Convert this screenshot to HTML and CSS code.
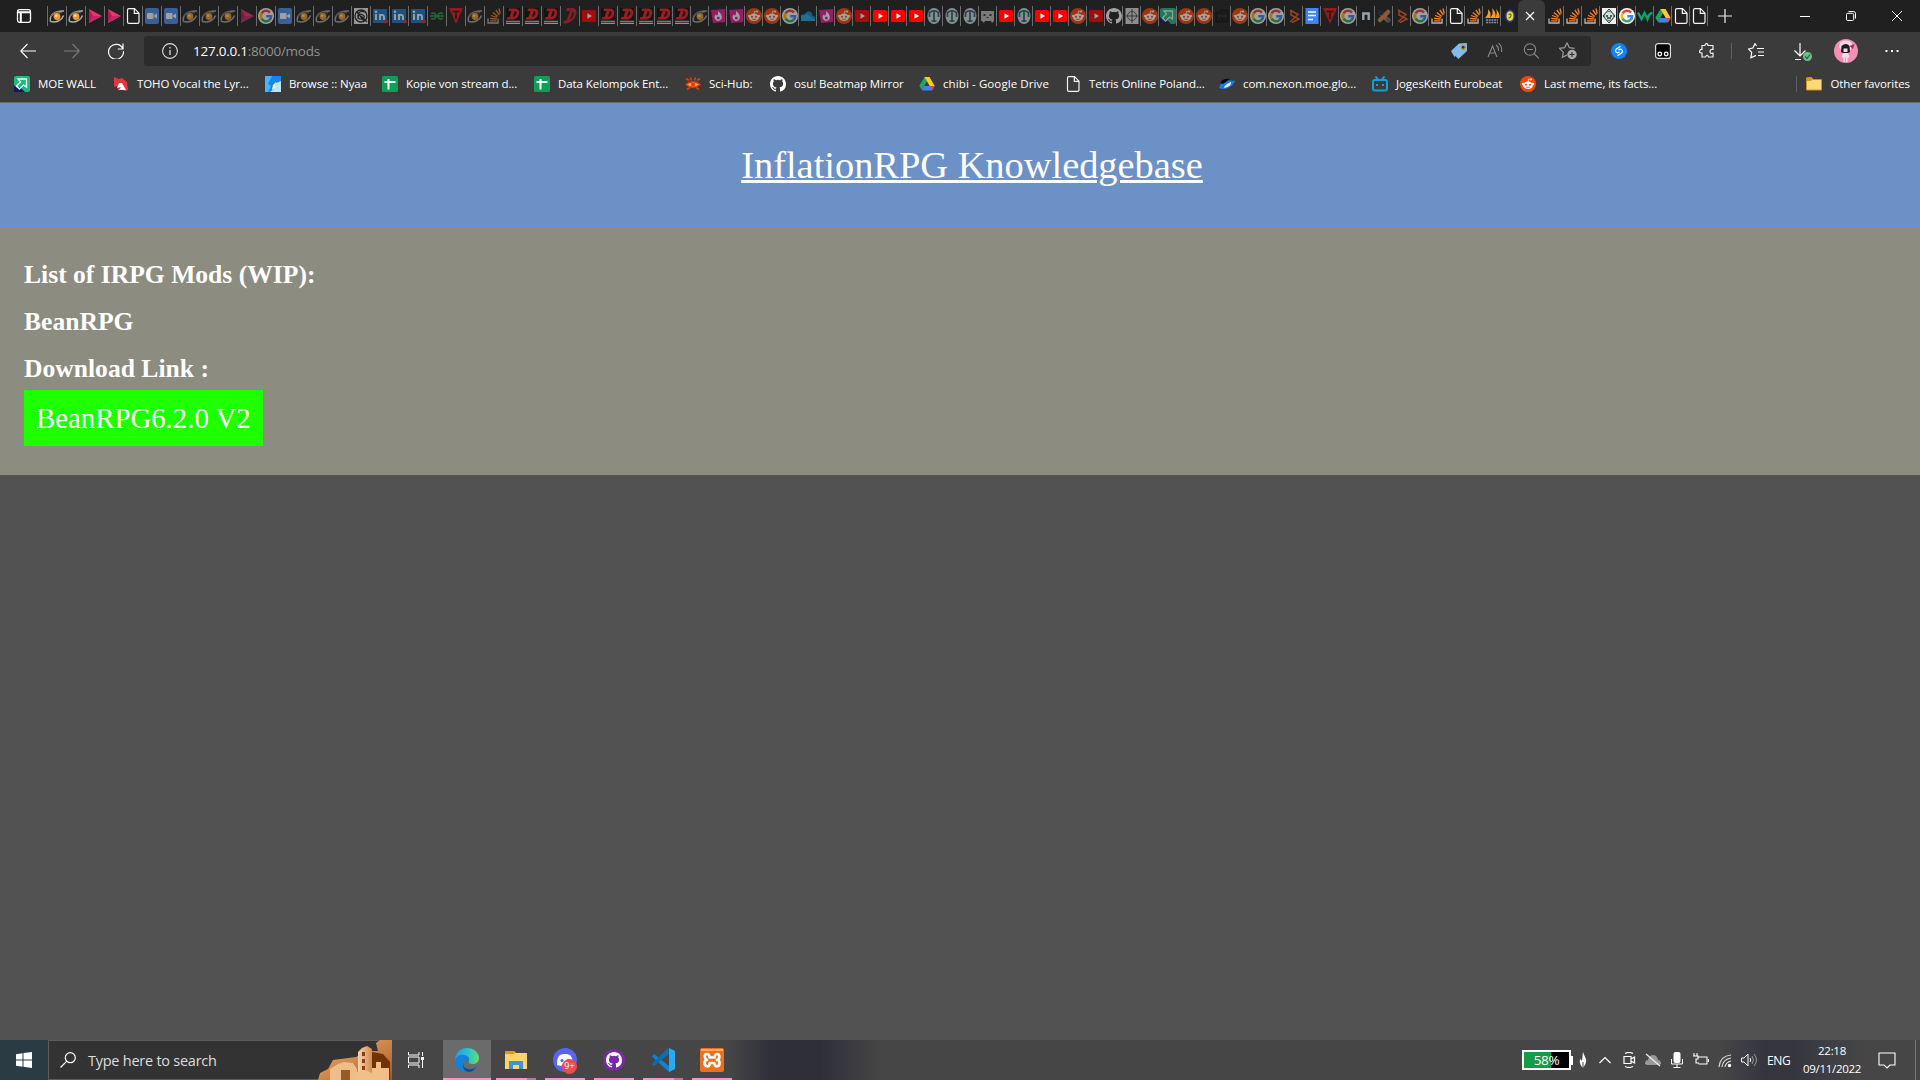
FILE: index.html
```html
<!DOCTYPE html>
<html lang="en">
<head>
<meta charset="utf-8">
<title>InflationRPG Knowledgebase</title>
<link rel="stylesheet" href="styles.css">
</head>
<body>
<svg class="sprite" aria-hidden="true">
  <symbol id="eye" viewBox="0 0 16 16"><path d="M1.500 13.500C0 7 6 2.500 15 3M1.500 13.500C8 15 13 12 14.500 7.500" fill="none" stroke="#a9a9a9" stroke-width="1.500"/><path d="M2 8.500C4 4 9 3.500 13 5" fill="none" stroke="#666" stroke-width="1.200"/><circle cx="8" cy="8.500" r="3.400" fill="#f39a26"/><circle cx="7.300" cy="7.800" r="1.300" fill="#ffe0a0"/></symbol>
  <symbol id="pink" viewBox="0 0 16 16"><path d="M2 1l13 7-13 7z" fill="#e8356f"/><path d="M2 1l4 7-4 7z" fill="#b01d58"/><path d="M2 15l4-7 9 0z" fill="#c92562"/></symbol>
  <symbol id="doc" viewBox="0 0 16 16"><path d="M2.500 2Q2.500.7 4 .7H9.500L14 5.200V14Q14 15.300 12.500 15.300H4Q2.500 15.300 2.500 14ZM9.300.7V5.400H14" fill="none" stroke="#f4f4f4" stroke-width="1.200"/></symbol>
  <symbol id="zoom" viewBox="0 0 16 16"><rect x="1" width="14" height="16" rx="2" fill="#4a8df0"/><rect x="3" y="5" width="6.500" height="6" rx="1" fill="#fff"/><path d="M10 7.500l3-2v5l-3-2z" fill="#fff"/></symbol>
  <symbol id="goog" viewBox="0 0 16 16"><circle cx="8" cy="8" r="8" fill="#fff"/><g fill="none" stroke-width="2.600"><path d="M12 4.600A5.100 5.100 0 0 0 3.600 5.400" stroke="#ea4335"/><path d="M3.600 5.400A5.100 5.100 0 0 0 3.600 10.600" stroke="#fbbc05"/><path d="M3.600 10.600A5.100 5.100 0 0 0 11.400 12" stroke="#34a853"/><path d="M11.400 12A5 5 0 0 0 13.100 8.200H8.200" stroke="#4285f4"/></g></symbol>
  <symbol id="knot" viewBox="0 0 16 16"><path d="M1 0h14v16H1z" fill="#eee"/><g fill="none" stroke="#222" stroke-width="1.300"><circle cx="8" cy="8" r="6"/><path d="M12 4Q6 2 5 7T10 11Q13 8 9 6.500T5 11M8 8l6 6M4 4l7 9"/></g></symbol>
  <symbol id="linked" viewBox="0 0 16 16"><path d="M1 1h14v14H1z" fill="#1679c8"/><path d="M4 6v6M8 12V6M8 9Q8 6.800 10 6.800T12 9V12" fill="none" stroke="#fff" stroke-width="1.800"/><circle cx="4" cy="3.800" r="1.200" fill="#fff"/><circle cx="14" cy="13.500" r="2" fill="#e3223a"/></symbol>
  <symbol id="gfg" viewBox="0 0 16 16"><path d="M2 5.500Q7 4 7 8T2 10.500M1 8h14M14 5.500Q9 4 9 8T14 10.500" fill="none" stroke="#2d9b4c" stroke-width="1.500"/></symbol>
  <symbol id="tri" viewBox="0 0 16 16"><path d="M1 0h14L8 16z" fill="#e3191d"/><path d="M4.500 3.500h7M8 3.500V11" stroke="#3b1012" stroke-width="1.700"/></symbol>
  <symbol id="stack" viewBox="0 0 16 16"><path d="M2 10.500V15H12V10.500" fill="none" stroke="#b8b8b8" stroke-width="1.300"/><path d="M4 12.800h6.500M4.100 10.300l6.500.7M5 7.500l6 2M6.800 4.500l5 4M9.800 2l3.600 5M13 .5l1.200 5" stroke="#f48024" stroke-width="1.300"/></symbol>
  <symbol id="dee" viewBox="0 0 16 16"><path d="M1 0h14v13H1z" fill="#0d0d0d"/><path d="M4 .5h6q5.500.5 4 6T6 11.500H1.500l1-2.500H4.500L6.500 3H3.500zM9.800 3L7.800 9q2.700-.3 3.500-3T9.800 3z" fill="#f01c24" fill-rule="evenodd"/><path d="M1 13.200h14M1 15.400h14" stroke="#e5e5e5" stroke-width="1.100"/></symbol>
  <symbol id="dee2" viewBox="0 0 16 16"><path d="M5 0H11Q16 1 14 7T5 15.500H1L2 12.500H4.500L8 3H4zM10.500 4L8 12Q10.500 10.500 11.500 7T10.500 4z" fill="#c91d2a" fill-rule="evenodd"/></symbol>
  <symbol id="yt" viewBox="0 0 16 16"><rect x="1" y="2" width="14" height="12" rx="1.500" fill="#f00"/><path d="M6.500 5.300L11 8l-4.500 2.700z" fill="#fff"/></symbol>
  <symbol id="fire" viewBox="0 0 16 16"><path d="M1 2L15 1V14L3 15Z" fill="#e81c9c"/><path d="M8 3Q13 7 11.500 11Q8 15 5 11Q3.800 8 6 6.500L7 8Q8.500 6 8 3" fill="#fff"/><circle cx="8.300" cy="10" r="1.500" fill="#e81c9c"/></symbol>
  <symbol id="red" viewBox="0 0 16 16"><circle cx="8" cy="8" r="8" fill="#ff4500"/><ellipse cx="8" cy="9.300" rx="4.900" ry="3.700" fill="#fff"/><circle cx="3.200" cy="8" r="1.300" fill="#fff"/><circle cx="12.800" cy="8" r="1.300" fill="#fff"/><circle cx="11" cy="3.500" r="1.100" fill="#fff"/><path d="M8 6l.7-3 2.300.5" stroke="#fff" fill="none" stroke-width=".8"/><circle cx="6" cy="8.700" r="1" fill="#ff4500"/><circle cx="10" cy="8.700" r="1" fill="#ff4500"/><path d="M6 11q2 1 4 0" stroke="#ff4500" fill="none" stroke-width=".8"/></symbol>
  <symbol id="cloud" viewBox="0 0 16 16"><path d="M1 13V7L5 6Q8 1 12 5V7L15 9V13Z" fill="#1384d0"/><path d="M1 8l6-2 8 6v1H1z" fill="#2ba3e8"/></symbol>
  <symbol id="anchor" viewBox="0 0 16 16"><ellipse cx="8" cy="8" rx="6.500" ry="8" fill="#c9e1e6"/><path d="M8 3v11M3.500 4.500Q8 1 12.500 4.500M3.500 4v5M12.500 4v5M5.500 13h5" fill="none" stroke="#345963" stroke-width="1.700"/></symbol>
  <symbol id="box" viewBox="0 0 16 16"><path d="M1 3h13v10l-2 2-1-2H5l-1 2-2-2H1z" fill="#bbb"/><path d="M3.500 6h2v2h-2zM9.500 6h2v2h-2zM6.500 9h2v1h-2z" fill="#333"/></symbol>
  <symbol id="git" viewBox="0 0 16 16"><path d="M8 0C3.580 0 0 3.580 0 8c0 3.540 2.290 6.530 5.470 7.590.4.070.55-.17.55-.38 0-.19-.01-.82-.01-1.490-2.010.37-2.530-.49-2.690-.94-.09-.23-.48-.94-.82-1.130-.28-.15-.68-.52-.01-.53.63-.01 1.080.58 1.230.82.72 1.210 1.870.87 2.330.66.07-.52.28-.87.51-1.070-1.780-.2-3.640-.89-3.640-3.950 0-.87.31-1.590.82-2.150-.08-.2-.36-1.020.08-2.120 0 0 .67-.21 2.200.82a7.600 7.600 0 0 1 4 0c1.530-1.040 2.200-.82 2.200-.82.44 1.100.16 1.920.08 2.120.51.56.82 1.270.82 2.150 0 3.070-1.870 3.750-3.650 3.950.29.25.54.73.54 1.480 0 1.070-.01 1.930-.01 2.200 0 .21.15.46.55.38A8 8 0 0 0 16 8c0-4.420-3.580-8-8-8z" fill="#fff"/></symbol>
  <symbol id="compass" viewBox="0 0 16 16"><path d="M1.500 0h13v16h-13z" fill="#ddd"/><circle cx="8" cy="8" r="4.500" fill="none" stroke="#555"/><path d="M8 1v14M2 8h12" stroke="#444"/></symbol>
  <symbol id="moe" viewBox="0 0 16 16"><rect width="16" height="16" rx="2" fill="#22b77d"/><path d="M0 16V9l3 3 3-1 5 5z" fill="#15195c"/><path d="M4 3h8.500v8l-3-2-4 4-3-3 4-4z" fill="none" stroke="#e7fff5" stroke-width="1.300"/></symbol>
  <symbol id="darkbox" viewBox="0 0 16 16"><path d="M2 4h4l1-2h7v12H2z" fill="#181818" stroke="#0b0b0b"/><path d="M5 8h1M8 8h1M11 8h1" stroke="#777"/></symbol>
  <symbol id="arrow" viewBox="0 0 16 16"><path d="M4 2l8 4.500L4 14M5 2v5l8 4-7 3.500" fill="none" stroke="#f05a28" stroke-width="1.500"/></symbol>
  <symbol id="gdoc" viewBox="0 0 16 16"><path d="M1.500 0h13v16h-13z" fill="#3f83f8"/><path d="M4 4h8M4 7.500h8M4 11.500h5" stroke="#fff" stroke-width="1.600"/></symbol>
  <symbol id="enn" viewBox="0 0 16 16"><path d="M1 0h14v16H1z" fill="#17202b"/><path d="M5.300 12V5.500H10.700V12" fill="none" stroke="#fff" stroke-width="2.400"/></symbol>
  <symbol id="cross" viewBox="0 0 16 16"><path d="M4.500 5l7 7M12 4l-8 8" stroke="#d98248" stroke-width="4.500" stroke-linecap="round"/><circle cx="4.500" cy="4.500" r="3" fill="#222d3b"/><circle cx="12" cy="12" r="2.600" fill="#6a6f74"/></symbol>
  <symbol id="sail" viewBox="0 0 16 16"><path d="M1 10Q5 6 4 1Q8 5 6 10ZM6 10Q10 6 8 0Q13 5 11 10ZM11 10Q14 5 12 1Q16 5 15.500 10Z" fill="#f69a2a"/><path d="M2 12h12M2 14.500h12" stroke="#8c8ca7" stroke-width="1.500" stroke-dasharray="2 .7"/></symbol>
  <symbol id="seal" viewBox="0 0 16 16"><ellipse cx="8" cy="8" rx="5" ry="6.500" fill="#2a38a0"/><ellipse cx="8" cy="8" rx="3.500" ry="4.800" fill="#e8df35"/><path d="M6.500 6.500q3-1.500 2.500 1t-2.500 2.500" fill="none" stroke="#5a5c18" stroke-width="1.100"/></symbol>
  <symbol id="badge" viewBox="0 0 16 16"><path d="M1 0h14v16H1z" fill="#eee"/><path d="M8 1l6 7-6 7-6-7z" fill="#d4e2d9" stroke="#333"/><circle cx="8" cy="8" r="4.500" fill="none" stroke="#3d8461"/><path d="M5 8h2M9 8h2M6 10h4" stroke="#333" stroke-width="1.500"/></symbol>
  <symbol id="dub" viewBox="0 0 16 16"><path d="M1 4.500L4.500 11 7.500 5l3 6q1.500-6 5-6" fill="none" stroke="#04aa6d" stroke-width="2.300"/></symbol>
  <symbol id="drive" viewBox="0 0 16 16"><path d="M5.500 1h5L5 10.500 3 14 .3 9.800z" fill="#20a464"/><path d="M5.500 1h5l5.200 9h-5z" fill="#ffca28"/><path d="M5 10h10.700L13 14.500H3z" fill="#3e82f7"/><path d="M11 10h4.700L13.500 14z" fill="#ea4335"/></symbol>
  <symbol id="horse" viewBox="0 0 16 16"><path d="M1 1l5 2 3-1 5 4 1 8-4 1-2-4-4 4-1-5-3 1z" fill="#e5343c"/><path d="M6 7l3 0 4 7H6l2-3-4 1z" fill="#fff"/></symbol>
  <symbol id="nyaa" viewBox="0 0 16 16"><path d="M0 0h16v16H0z" fill="#1686ef"/><path d="M0 0h7L3 8l3 2-3 6H0z" fill="#49b4fa"/><path d="M16 5v11H5l4-3 2-6z" fill="#bfe4fb"/><path d="M8 9l3-3-1 6-3 2z" fill="#fff"/></symbol>
  <symbol id="sheet" viewBox="0 0 16 16"><rect width="16" height="16" rx="1.500" fill="#0f9d58"/><path d="M2.500 6h11M6.500 3v10.500" stroke="#fff" stroke-width="2"/></symbol>
  <symbol id="sci" viewBox="0 0 16 16"><path d="M1 2.500l3 2M5.500 1.500l1 3M10.500 1.500l-1 3M15 2.500l-3 2M2 13.500l3-2M14 13.500l-3-2" stroke="#e23b1a" stroke-width="1.600"/><path d="M1 8.500Q8 3 15 8.500Q8 14 1 8.500" fill="#f5ae25" stroke="#e23b1a" stroke-width="1.500"/><circle cx="8" cy="8.500" r="2" fill="#d31"/></symbol>
  <symbol id="ufo" viewBox="0 0 16 16"><path d="M0 12Q2 5 7 4L16 5Q14 10 9 12Q4 14 0 12" fill="#1e78ed"/><path d="M1 7Q4 2 11 3L4 8z" fill="#080c16"/><path d="M5 12Q5 9 12 6Q13 10 5 12" fill="#dff4ff"/></symbol>
  <symbol id="bili" viewBox="0 0 16 16"><rect x="1" y="4" width="14" height="10.500" rx="2" fill="none" stroke="#12a0db" stroke-width="2"/><path d="M3.500.7L6 3.500M12.500.7L10 3.500M5 8v2M11 8v2" stroke="#12a0db" stroke-width="2"/></symbol>
</svg>

<header class="chrome">
  <div class="tabstrip">
    <svg class="tabmenu" viewBox="0 0 16 16"><rect x="1.500" y="1.700" width="13" height="12.600" rx="2" fill="none" stroke="#fff" stroke-width="1.300"/><path d="M1.500 4.200h13M4.800 4v10" stroke="#fff" stroke-width="2"/></svg>
    <div class="tabs wide">
      <svg><use href="#eye"/></svg><svg><use href="#eye"/></svg><svg><use href="#pink"/></svg><svg><use href="#pink"/></svg><svg><use href="#doc"/></svg><svg class="dim"><use href="#zoom"/></svg><svg class="dim"><use href="#zoom"/></svg><svg class="dim"><use href="#eye"/></svg><svg class="dim"><use href="#eye"/></svg><svg class="dim"><use href="#eye"/></svg><svg class="dim"><use href="#pink"/></svg><svg class="dim"><use href="#goog"/></svg><svg class="dim"><use href="#zoom"/></svg><svg class="dim"><use href="#eye"/></svg><svg class="dim"><use href="#eye"/></svg><svg class="dim"><use href="#eye"/></svg><svg class="dim"><use href="#knot"/></svg><svg class="dim"><use href="#linked"/></svg><svg class="dim"><use href="#linked"/></svg><svg class="dim"><use href="#linked"/></svg><svg class="dim"><use href="#gfg"/></svg><svg class="dim"><use href="#tri"/></svg><svg class="dim"><use href="#eye"/></svg><svg class="dim"><use href="#stack"/></svg><svg class="dim"><use href="#dee"/></svg><svg class="dim"><use href="#dee"/></svg><svg class="dim"><use href="#dee"/></svg><svg class="dim"><use href="#dee2"/></svg><svg class="dim"><use href="#yt"/></svg><svg class="dim"><use href="#dee"/></svg><svg class="dim"><use href="#dee"/></svg>
    </div>
    <div class="tabs">
      <svg class="dim"><use href="#dee"/></svg><svg class="dim"><use href="#dee"/></svg><svg class="dim"><use href="#dee"/></svg><svg class="dim"><use href="#eye"/></svg><svg class="dim"><use href="#fire"/></svg><svg class="dim"><use href="#fire"/></svg><svg class="dim"><use href="#red"/></svg><svg class="dim"><use href="#red"/></svg><svg class="dim"><use href="#goog"/></svg><svg class="dim"><use href="#cloud"/></svg><svg class="dim"><use href="#fire"/></svg><svg class="dim"><use href="#red"/></svg><svg class="dim"><use href="#yt"/></svg><svg><use href="#yt"/></svg><svg><use href="#yt"/></svg><svg><use href="#yt"/></svg><svg class="dim"><use href="#anchor"/></svg><svg class="dim"><use href="#anchor"/></svg><svg class="dim"><use href="#anchor"/></svg><svg class="dim"><use href="#box"/></svg><svg><use href="#yt"/></svg><svg class="dim"><use href="#anchor"/></svg><svg><use href="#yt"/></svg><svg><use href="#yt"/></svg><svg class="dim"><use href="#red"/></svg><svg class="dim"><use href="#yt"/></svg><svg class="dim"><use href="#git"/></svg><svg class="dim"><use href="#compass"/></svg><svg class="dim"><use href="#red"/></svg><svg class="dim"><use href="#moe"/></svg><svg class="dim"><use href="#red"/></svg><svg class="dim"><use href="#red"/></svg><svg class="dim"><use href="#darkbox"/></svg><svg class="dim"><use href="#red"/></svg><svg class="dim"><use href="#goog"/></svg><svg class="dim"><use href="#goog"/></svg><svg class="dim"><use href="#arrow"/></svg><svg><use href="#gdoc"/></svg><svg class="dim"><use href="#tri"/></svg><svg class="dim"><use href="#goog"/></svg><svg class="dim"><use href="#enn"/></svg><svg class="dim"><use href="#cross"/></svg><svg class="dim"><use href="#arrow"/></svg><svg class="dim"><use href="#goog"/></svg><svg><use href="#stack"/></svg><svg><use href="#doc"/></svg><svg><use href="#stack"/></svg><svg><use href="#sail"/></svg><svg><use href="#seal"/></svg>
    </div>
    <div class="active-tab"><svg viewBox="0 0 10 10"><path d="M1 1l8 8M9 1L1 9" stroke="#fff" stroke-width="1.200"/></svg></div>
    <div class="tabs after">
      <svg><use href="#stack"/></svg><svg><use href="#stack"/></svg><svg><use href="#stack"/></svg><svg><use href="#badge"/></svg><svg><use href="#goog"/></svg><svg><use href="#dub"/></svg><svg><use href="#drive"/></svg><svg><use href="#doc"/></svg><svg><use href="#doc"/></svg>
    </div>
    <svg class="newtab" viewBox="0 0 14 14"><path d="M7 0v14M0 7h14" stroke="#eee" stroke-width="1.200"/></svg>
    <div class="winbtns">
      <svg viewBox="0 0 10 10"><path d="M0 5.500h10" stroke="#fff"/></svg>
      <svg viewBox="0 0 10 10"><rect x=".5" y="2.300" width="7.200" height="7.200" rx="1.200" fill="none" stroke="#fff"/><path d="M2.500.5H7.500Q9.500.5 9.500 2.500V7.500" fill="none" stroke="#fff"/></svg>
      <svg viewBox="0 0 10 10"><path d="M0 0l10 10M10 0L0 10" stroke="#fff"/></svg>
    </div>
  </div>

  <div class="toolbar">
    <div class="nav">
      <svg viewBox="0 0 16 16"><path d="M16 8H.8M7.500 1L.7 8l6.800 7" stroke="#fff" fill="none" stroke-width="1.100"/></svg>
      <svg viewBox="0 0 16 16"><path d="M0 8h15.200M8.500 1l6.800 7-6.800 7" stroke="#7c7c7c" fill="none" stroke-width="1.100"/></svg>
      <svg viewBox="0 0 16 16"><path d="M15 6A7.500 7.500 0 1 0 15.500 8M15 .5V6H9.800" stroke="#fff" fill="none" stroke-width="1.200"/></svg>
    </div>
    <div class="address">
      <svg class="info" viewBox="0 0 16 16"><circle cx="8" cy="8" r="7.400" fill="none" stroke="#ddd" stroke-width="1.100"/><path d="M8 7v5M8 4v1.500" stroke="#ddd" stroke-width="1.300"/></svg>
      <span class="url"><b>127.0.0.1</b>:8000/mods</span>
      <div class="page-actions">
        <svg viewBox="0 0 16 16"><path d="M0 8L8 .5 15 0q1 0 1 1v7l-8.500 8-3-3-1 1z" fill="#80bcec"/><circle cx="12.200" cy="4.300" r="2" fill="#2b2b2b" stroke="#c49613" stroke-width="1.200"/></svg>
        <svg viewBox="0 0 16 16"><g fill="none" stroke="#888" stroke-width="1.100"><path d="M1 14L5.500 3 10 14M2.600 10h5.800M9 2q3 2 2.500 6M11.500 0q4 3 3 9"/></g></svg>
        <svg viewBox="0 0 16 16"><g fill="none" stroke="#888" stroke-width="1.100"><circle cx="7" cy="6.500" r="5.700"/><path d="M11 10.500l5 5M4 6.500h6"/></g></svg>
        <svg viewBox="0 0 18 18"><path d="M8 .8l2.300 4.800 5.300.8M8 .8L5.700 5.600.5 6.400l3.800 3.700-.9 5.300L8 13" fill="none" stroke="#999" stroke-width="1.200"/><circle cx="13" cy="12.500" r="4.700" fill="#aaa"/><path d="M13 10v5M10.500 12.500h5" stroke="#2b2b2b" stroke-width="1.100"/></svg>
      </div>
    </div>
    <div class="extensions">
      <svg viewBox="0 0 16 16"><circle cx="8" cy="8" r="8" fill="#0a84ff"/><path d="M9.500 3.300L5.200 6.200Q3.700 8 5.300 9.300T8.500 8.700M6.500 12.700L10.800 9.800Q12.300 8 10.700 6.700T7.500 7.300" fill="none" stroke="#fff" stroke-width="1.300"/></svg>
      <svg viewBox="0 0 16 16"><rect x=".6" y=".6" width="14.800" height="14.800" rx="2.500" fill="#000" stroke="#ddd" stroke-width="1.200"/><circle cx="4.800" cy="11" r="1.800" fill="none" stroke="#fff" stroke-width="1.300"/><circle cx="11.200" cy="11" r="1.800" fill="none" stroke="#fff" stroke-width="1.300"/></svg>
      <svg viewBox="0 0 16 16"><path d="M3 2.500H6Q6.500-.4 8.500 1L9 2.500H14V6.500Q11 6 11 8.500T14 10V14H9.500Q9 12 7.500 12.500L6.500 14H3V10Q0 10 .7 8T3 6.500Z" fill="none" stroke="#eee" stroke-width="1.200"/></svg>
      <i class="divider"></i>
      <svg viewBox="0 0 16 16"><path d="M8.500 3L7 .7 4.800 5 .5 5.900l3.200 3.500-.8 5.300L8 12.400M9 5.500h7M10 9h6M10 12.500h6" fill="none" stroke="#fff" stroke-width="1.200"/></svg>
      <svg viewBox="0 0 18 18"><path d="M6 0v13M.5 7.500L6 13l5.500-5.500M1 16.500h6" fill="none" stroke="#fff" stroke-width="1.200"/><circle cx="13.500" cy="13.500" r="4.500" fill="#6cc188"/><path d="M11 13.500l2 2 3-4" fill="none" stroke="#263" stroke-width="1.200"/></svg>
      <svg class="avatar" viewBox="0 0 24 24"><circle cx="12" cy="12" r="12" fill="#f48fb1"/><path d="M5 8Q5 1 12 1.500T18 7l-2 5H8z" fill="#f8d8e4"/><path d="M7.500 7q4.500-4 8 0l.5 6-2 1H9l-2-1z" fill="#1e1a20"/><path d="M9.500 9.500h4v3.500h-4z" fill="#f7dfdd"/><path d="M15.500 7l5-2-1.500 5z" fill="#a32768"/><path d="M9 14h5l1.500 4-2 1v4h-1.500v-4h-1v4H9.500v-4l-2-1z" fill="#f7dbe8"/></svg>
      <svg viewBox="0 0 16 16"><path d="M1.500 7h2v2h-2zM7 7h2v2H7zM12.500 7h2v2h-2z" fill="#fff"/></svg>
    </div>
  </div>

  <div class="bookmarks">
    <div class="links">
      <a><svg><use href="#moe"/></svg>MOE WALL</a>
      <a><svg><use href="#horse"/></svg>TOHO Vocal the Lyr...</a>
      <a><svg><use href="#nyaa"/></svg>Browse :: Nyaa</a>
      <a><svg><use href="#sheet"/></svg>Kopie von stream d...</a>
      <a><svg><use href="#sheet"/></svg>Data Kelompok Ent...</a>
      <a><svg><use href="#sci"/></svg>Sci-Hub:</a>
      <a><svg><use href="#git"/></svg>osu! Beatmap Mirror</a>
      <a class="loose"><svg><use href="#drive"/></svg>chibi - Google Drive</a>
      <a><svg><use href="#doc"/></svg>Tetris Online Poland...</a>
      <a><svg><use href="#ufo"/></svg>com.nexon.moe.glo...</a>
      <a><svg><use href="#bili"/></svg>JogesKeith Eurobeat</a>
      <a><svg><use href="#red"/></svg>Last meme, its facts...</a>
    </div>
    <a class="other"><svg viewBox="0 0 16 16"><path d="M.5 2.500q0-1 1-1h4l1.500 2h8q.5 0 .5.500v10h-15z" fill="#ffd978" stroke="#c7941d"/><path d="M1 2h4.500l1 1.500L5 5H1z" fill="#c99b2c"/></svg>Other favorites</a>
  </div>
</header>

<main class="page">
  <div class="banner"><a>InflationRPG Knowledgebase</a></div>
  <section class="mods">
    <h2>List of IRPG Mods (WIP):</h2>
    <h2>BeanRPG</h2>
    <h2>Download Link :</h2>
    <a class="download">BeanRPG6.2.0 V2</a>
  </section>
</main>

<footer class="taskbar">
  <div class="start"><svg viewBox="0 0 16 16"><path d="M0 2.200L6.500 1.300V7.500H0zM7.500 1.100L16 0v7.500H7.500zM0 8.500h6.500v6.200L0 13.800zM7.500 8.500H16V16l-8.500-1.200z" fill="#fff"/></svg></div>
  <div class="search">
    <svg class="lens" viewBox="0 0 16 16"><circle cx="10.300" cy="5.700" r="5" fill="none" stroke="#fff" stroke-width="1.200"/><path d="M6.800 9.200L.5 15.500" stroke="#fff" stroke-width="1.200"/></svg>
    <span>Type here to search</span>
    <svg class="petra" viewBox="0 0 74 40"><defs><linearGradient id="rock" x2="1" y2="1"><stop stop-color="#f4b77a"/><stop offset="1" stop-color="#a9571d"/></linearGradient><linearGradient id="stone"><stop stop-color="#f9d5ad"/><stop offset="1" stop-color="#d28b51"/></linearGradient></defs><path d="M0 40L2 33 10 29 15 20 38 17 48 11 60 11 58 3 62 0H74V40z" fill="url(#rock)"/><path d="M54 12L65 14 72 22V40H52z" fill="#713306"/><path d="M40 40V12l4-4 5-2 5 3v31z" fill="url(#stone)"/><path d="M44 12h3v4h-3zM44 19h3v4h-3zM44 26h3v4h-3z" fill="#864216"/><path d="M12 40V29l8-5 6-2 9 1 4 6v11z" fill="#efbd8a"/><path d="M23 30h9v10h-9z" fill="#985927"/><path d="M38 40v-8l9-2 7 3v7zM54 40V28h4v-6h5v6h8v12z" fill="#f2bf88"/></svg>
  </div>
  <div class="apps">
    <div class="app plain"><svg class="taskview" viewBox="0 0 16 16"><path d="M.5 0v3H11V0M.5 16v-3H11v3M.5 5h10.500v6H.5zM14.500 0v4M14.500 8v8" fill="none" stroke="#fff"/><path d="M13 5h3v3h-3z" fill="#fff"/></svg></div>
    <div class="app current"><svg viewBox="0 0 24 24"><defs><linearGradient id="e1"><stop stop-color="#1b9de0"/><stop offset=".6" stop-color="#31c5cc"/><stop offset="1" stop-color="#67e05a"/></linearGradient></defs><path d="M0 12C0 5 5 0 12 0s12 5 12 10c0 4-3 6-6 6-4 0-5-1-4-3C15 9 10 7 7 8Q2 9 0 12" fill="url(#e1)"/><path d="M0 12Q3 6 9 7t5 5q-6 0-5 5 2 6 8 6Q7 26 2 19 0 16 0 12" fill="#1681d8"/><path d="M8 15q0 6 7 6 5 0 7-3-3 6-9 6Q7 22 8 15" fill="#104e9e"/></svg></div>
    <div class="app multi"><svg viewBox="0 0 24 24"><path d="M1 3h9l2 2h11v16H1z" fill="#fdd566"/><path d="M1 3h9l1 2-1 1H1z" fill="#de9a0b"/><path d="M5 21v-8h14v8h-4v-4H9v4z" fill="#3a96d6"/></svg></div>
    <div class="app"><svg viewBox="0 0 24 24"><circle cx="12" cy="12" r="12" fill="#5865f2"/><path d="M4 17Q4 9 7 7l3-1h4l3 1q3 3 3 10l-4 1-2-2h-4l-2 2z" fill="#fff"/><circle cx="9" cy="12.500" r="1.600" fill="#5865f2"/><circle cx="15" cy="12.500" r="1.600" fill="#5865f2"/></svg><span class="count">9+</span></div>
    <div class="app"><svg viewBox="0 0 24 24"><circle cx="12" cy="12" r="11" fill="#7a29a5"/><use href="#git" x="4" y="4" width="16" height="16"/></svg></div>
    <div class="app multi"><svg viewBox="0 0 24 24"><path d="M18 0l6 3v18l-6 3L1 8.500 3 6l15 12z" fill="#1283cd"/><path d="M18 0l6 3v18l-6 3z" fill="#29a8f3"/><path d="M18 6L3 18l-2-2L17 0z" fill="#0870b7"/></svg></div>
    <div class="app"><svg viewBox="0 0 24 24"><rect width="24" height="24" rx="2" fill="#ed6f19"/><path d="M1 1h22v2H1z" fill="#f8ac72"/><path d="M9.500 9.500Q9.500 6 7 6T4.800 8.700 7 12Q4.500 12.500 4.500 15T7 18.300 9.800 15H14.200Q14.500 18.300 17 18.300T19.500 15 17 12Q19.500 11.500 19.300 8.700T17 6 14.500 9.500Z" stroke="#fff" fill="none" stroke-width="2.700" stroke-linejoin="round"/></svg></div>
  </div>
  <div class="tray">
    <div class="battery"><span>58%</span></div>
    <svg class="flame" viewBox="0 0 8 16"><path d="M4 0Q5 3 7 7 8 11 4 16-1 11 1.500 7L3 9z" fill="#fff"/><path d="M4 10v6" stroke="#444"/></svg>
    <svg viewBox="0 0 16 16"><path d="M2.500 11L8 5.500l5.500 5.500" fill="none" stroke="#fff" stroke-width="1.200"/></svg>
    <svg viewBox="0 0 16 16"><path d="M4 1.500Q8-.5 12 1.500M4 14.500q4 2 8 0M3 4.500h7v7H3zM10 7l3.500-2v6L10 9" fill="none" stroke="#fff" stroke-width="1.200"/></svg>
    <svg viewBox="0 0 16 16"><path d="M0 12Q0 8 3 8 4 3 8 3t5 5q3 0 3 4l-2 1H2z" fill="#999"/><path d="M1 2l14 12" stroke="#eee" stroke-width="1.300"/></svg>
    <svg viewBox="0 0 16 16"><rect x="4.500" width="7" height="11" rx="2" fill="#fff"/><path d="M2.500 7v5h11V7M8 12v3.500M4.500 15.500h7" fill="none" stroke="#fff"/></svg>
    <svg viewBox="0 0 16 16"><path d="M5.500 5H14v7H5.500M15.500 7v3M1 1v3M4 1v3M0 4h5v3H3v4h3" fill="none" stroke="#fff" stroke-width="1.100"/></svg>
    <svg viewBox="0 0 16 16"><path d="M2 15Q3 4 14 3M5 15Q6 7 14 6M8 15q1-5 6-6" fill="none" stroke="#ddd" stroke-width="1.200"/><circle cx="12.500" cy="13.500" r="1.700" fill="#fff"/></svg>
    <svg viewBox="0 0 16 16"><path d="M.5 6H3l4-4v12l-4-4H.5z" fill="none" stroke="#fff"/><path d="M9 6q1.500 2 0 4" fill="none" stroke="#fff"/><path d="M11 4q3 4 0 8M13 2q5 6 0 12" fill="none" stroke="#999"/></svg>
    <span class="lang">ENG</span>
    <div class="clock"><span>22:18</span><span>09/11/2022</span></div>
    <svg class="notes" viewBox="0 0 18 18"><path d="M1 2h16v12h-5l-3 3-3-3H1z" fill="none" stroke="#fff" stroke-width="1.100"/></svg>
    <i class="peek"></i>
  </div>
</footer>
</body>
</html>
```
FILE: styles.css
```css
* { box-sizing: border-box; }
body {
  margin: 0;
  width: 1920px;
  height: 1080px;
  overflow: hidden;
  display: flex;
  flex-direction: column;
  background: #525252;
  font-family: "Liberation Serif", "Times New Roman", serif;
  color: #fff;
}
svg { display: block; flex: none; width: 16px; height: 16px; }
.sprite { display: none; }

/* browser frame */
.chrome {
  flex: none;
  height: 103px;
  background: #3b3b3b;
  border-bottom: 1px solid #6a6a64;
  font-family: "Open Sans", "Noto Sans", sans-serif;
}
.tabstrip { display: flex; height: 32px; background: #202020; align-items: center; }
.tabmenu { margin: 0 7px 0 16px; }
.tabs { display: flex; height: 20px; }
.tabmenu + .tabs { margin-left: 8px; }
.tabs svg { width: 18px; height: 20px; padding: 2px 0 2px 1px; border-left: 1px solid #6d6d6d; }
.tabs.wide svg { width: 19px; padding: 2px 1px; }
.tabs.after svg:first-child { border-left-color: transparent; }
.tabs.after { border-right: 1px solid #6d6d6d; }
.tabs .dim use { opacity: .58; }
.active-tab {
  width: 27px;
  height: 32px;
  background: #3b3b3b;
  border-radius: 6px 6px 0 0;
  display: flex;
  align-items: center;
  padding-left: 7px;
}
.active-tab svg { width: 10px; height: 10px; }
.newtab { width: 14px; height: 14px; margin-left: 10px; }
.winbtns { display: flex; gap: 36px; margin-left: auto; margin-right: 18px; }
.winbtns svg { width: 10px; height: 10px; }

.toolbar { display: flex; align-items: center; height: 38px; }
.nav { display: flex; width: 144px; padding-left: 20px; gap: 28px; }
.address {
  display: flex;
  align-items: center;
  width: 1447px;
  height: 30px;
  background: #2b2b2b;
  border-radius: 3px;
  padding: 0 14px 0 18px;
}
.url { margin-left: 15px; font-size: 13.500px; line-height: 20px; letter-spacing: -.25px; color: #929292; }
.url b { font-weight: 400; color: #fff; }
.page-actions { display: flex; gap: 20px; margin-left: auto; align-items: center; }
.page-actions svg:last-child { width: 18px; height: 18px; }
.extensions { display: flex; flex: 1; align-items: center; padding-left: 20px; gap: 28px; }
.divider { width: 1px; height: 16px; background: #606060; margin: 0 -12px; }
.extensions svg:nth-child(6) { width: 18px; height: 18px; margin: 2px -3px 0 2px; }
.extensions .avatar { width: 24px; height: 24px; margin-left: -3px; margin-right: -2px; }

.bookmarks { display: flex; height: 28px; align-items: center; font-size: 11.500px; letter-spacing: -.08px; }
.links {
  display: grid;
  grid-template-columns: 99px 152px 117px 152px 151px 85px 149px 146px 154px 153px 148px 160px;
  padding-left: 14px;
}
.bookmarks a { display: flex; align-items: center; gap: 8px; white-space: nowrap; line-height: 16px; }
.bookmarks .loose { letter-spacing: .1px; }
.other { margin-left: auto; margin-right: 10px; padding-left: 9px; border-left: 1px solid #606060; }

/* site content */
.page { flex: 1; }
.banner {
  height: 124px;
  background: #6c91c7;
  padding: 40px 0 0 24px;
  text-align: center;
  font-size: 38.400px;
  line-height: 44px;
}
.banner a { text-decoration: underline; text-decoration-thickness: 3px; }
.mods { height: 248px; background: #8c8c80; padding: 33px 24px 0; }
.mods h2 { margin: 0 0 17px; font-size: 25.600px; line-height: 30px; }
.mods h2:nth-child(3) { margin-bottom: 6px; }
.download {
  display: block;
  width: max-content;
  padding: 12px;
  background: #1eff00;
  font-size: 28.800px;
  line-height: 32px;
}

/* desktop taskbar */
.taskbar {
  flex: none;
  display: flex;
  height: 40px;
  background: linear-gradient(90deg, #464646 0 730px, #30303a 770px, #2e2e38 820px, #464646 880px, #464646 1720px, #353540 1765px, #363640 1795px, #464646 1860px);
  font-family: "Open Sans", "Noto Sans", sans-serif;
}
.start { display: flex; width: 48px; align-items: center; justify-content: center; background: #2b3b44; }
.search {
  display: flex;
  align-items: center;
  width: 344px;
  border: 1px solid #5d5d5d;
  border-right: 0;
  background: #333;
  padding-left: 11px;
  font-size: 14.500px;
  letter-spacing: -.25px;
  color: #ddd;
}
.search span { margin-left: 12px; }
.petra { width: 74px; height: 40px; margin-left: auto; }
.apps { display: flex; }
.app { position: relative; display: flex; align-items: center; justify-content: center; width: 49px; }
.app svg { width: 24px; height: 24px; }
.app .taskview { width: 16px; height: 16px; }
.plain { width: 51px; padding-right: 3px; }
.app.current { width: 48px; background: #6b6b6b; }
.app:not(.plain)::after {
  content: "";
  position: absolute;
  bottom: 0;
  width: 40px;
  height: 2px;
  background: #ff8fd0;
}
.app.current::after { width: 48px; }
.app.multi::after { background: linear-gradient(90deg, #ff8fd0 31px, #c66fa4 31px); }
.count {
  position: absolute;
  left: 22px;
  top: 19px;
  width: 15px;
  height: 15px;
  border-radius: 50%;
  background: #ed4b50;
  font-size: 9px;
  line-height: 14px;
  text-align: center;
}
.tray { display: flex; align-items: center; margin-left: auto; width: 398px; gap: 8px; }
.battery {
  position: relative;
  width: 49px;
  height: 20px;
  border: 2px solid #fff;
  background: linear-gradient(90deg, #169b46 0 27px, #000 27px);
  font-size: 13.500px;
  letter-spacing: -.3px;
  line-height: 16px;
  text-align: center;
}
.battery::after { content: ""; position: absolute; right: -4px; top: 4px; width: 2px; height: 9px; background: #fff; }
.tray .flame { width: 8px; margin-right: 2px; }
.lang { font-size: 12px; width: 24px; margin-left: 2px; letter-spacing: -.3px; }
.clock { display: flex; flex-direction: column; align-items: center; width: 60px; margin-left: 3px; font-size: 11.500px; line-height: 18px; letter-spacing: -.3px; }
.tray .notes { width: 18px; height: 18px; margin-left: 8px; }
.peek { width: 1px; height: 40px; background: #777; margin: 0 4px 0 auto; }
```
